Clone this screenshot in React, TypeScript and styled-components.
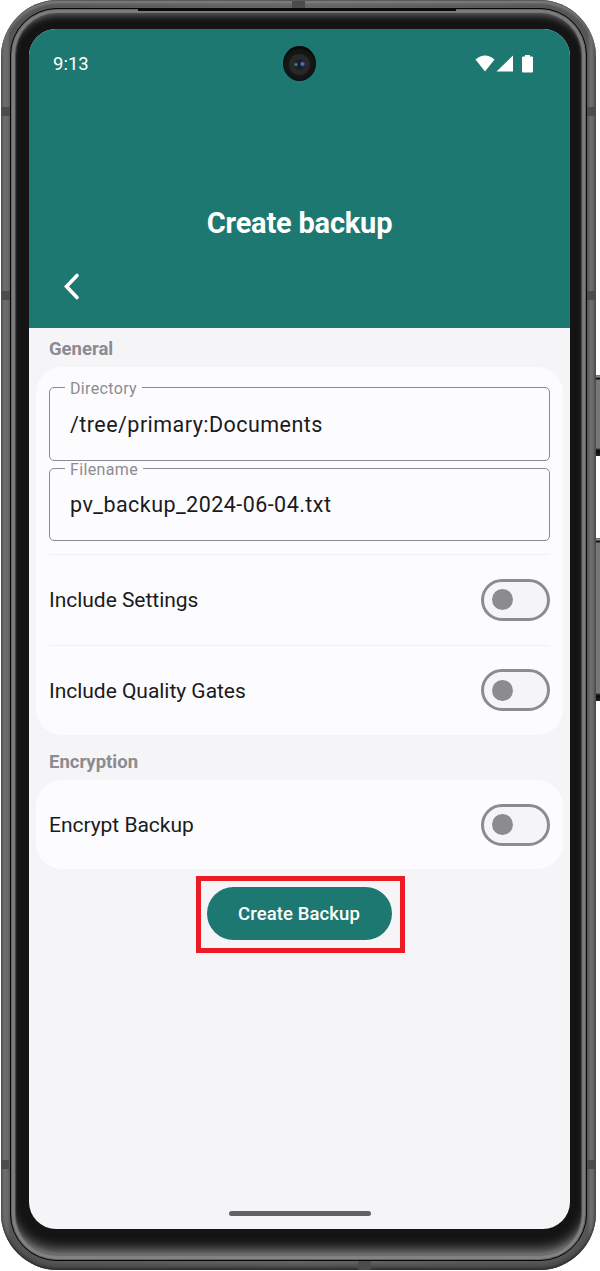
import React from 'react';
import styled, { createGlobalStyle } from 'styled-components';

const teal = '#1e7872';
const grey = '#8c8b90';

const GlobalStyle = createGlobalStyle`
  * { box-sizing: border-box; }
  body { margin: 0; background: #fff; font-family: Roboto, sans-serif; overflow: hidden; }
`;

const Stage = styled.div`
  position: relative;
  width: 600px;
  height: 1271px;
  padding: 0 4px 1px 1px;
`;

const Frame = styled.div`
  position: relative;
  height: 1270px;
  padding: 8px 9px 9px;
  border-radius: 57px;
  background: linear-gradient(90deg, #555 0, #6d6d6d 3px, #686868 7px, #555 9px, #666 50%, #555 586px, #707070 590px, #626262 593px, #444 595px);
  box-shadow: inset 0 1px 1px #555, inset 0 4px 3px -1px #858585, inset 0 -2px 2px #333, inset 0 -7px 4px -2px #484848;
`;

const Bezel = styled.div`
  height: 1253px;
  padding: 20px 16px 31px 18px;
  border: 1px solid #080808;
  border-radius: 47px;
  background: #141414;
  box-shadow:
    inset 0 0 0 1px #626262,
    inset 0 -5px 5px 0 #858585,
    inset 0 0 1px 4px #7c7c7c,
    inset 0 0 1px 5px #454545,
    inset 0 7px 6px 0 #5a5a5a,
    inset 0 -14px 12px -3px #747474;
`;

const Screen = styled.main`
  position: relative;
  display: flex;
  flex-direction: column;
  width: 541px;
  height: 1200px;
  border-radius: 27px;
  overflow: hidden;
  background: #f5f5f8;
`;

const SideButton = styled.div<{ $top: number; $height: number }>`
  position: absolute;
  left: 596px;
  top: ${(p) => p.$top}px;
  width: 4px;
  height: ${(p) => p.$height}px;
  background: linear-gradient(#666 0, #999 2px, #111 3px, #111 4px, #777 5px, #777 calc(100% - 8px), #333 calc(100% - 7px), #080808 calc(100% - 5px), #222 100%);
`;

const Band = styled.div<{ $x: number; $y: number; $w: number; $h: number }>`
  position: absolute;
  left: ${(p) => p.$x}px;
  top: ${(p) => p.$y}px;
  width: ${(p) => p.$w}px;
  height: ${(p) => p.$h}px;
  background: #4c4c4c;
`;

const Earpiece = styled.div`
  position: absolute;
  left: 138px;
  top: 9px;
  width: 318px;
  height: 2px;
  background: #080808;
`;

const Camera = styled.div`
  position: absolute;
  left: 254px;
  top: 17px;
  width: 33px;
  height: 35px;
  border-radius: 50%;
  background:
    radial-gradient(circle at 13px 18.5px, #5ba39d 0, #24504f 1.5px, transparent 2.5px),
    radial-gradient(circle at 19.5px 18px, #7492d6 0, #2e4586 2px, transparent 3px),
    radial-gradient(circle at 16.5px 18.5px, #161b24 0, #1c1f24 5px, #292929 6px, #272727 10px, #161616 11px, #141414 15px, #060606 17px);
`;

const Header = styled.header`
  height: 299px;
  background: ${teal};
  color: #fff;
  display: flex;
  flex-direction: column;
`;

const StatusBar = styled.div`
  display: flex;
  justify-content: space-between;
  align-items: center;
  height: 70px;
  padding: 0 36px 0 24px;
  font-size: 18.5px;
`;

const Title = styled.h1`
  margin: 105px 0 0;
  height: 38px;
  line-height: 38px;
  text-align: center;
  font-size: 29px;
  font-weight: 700;
  letter-spacing: -0.2px;
`;

const BackButton = styled.button`
  display: flex;
  width: 24px;
  height: 32px;
  margin: 27px 0 0 31px;
  padding: 0;
  border: 0;
  background: none;
`;

const SectionTitle = styled.h2<{ $height: number }>`
  margin: 0;
  height: ${(p) => p.$height}px;
  padding: 0 20px 6px;
  display: flex;
  align-items: flex-end;
  line-height: 24px;
  font-size: 18.5px;
  font-weight: 700;
  color: ${grey};
`;

const Card = styled.section`
  margin: 0 7px;
  padding: 0 13px;
  border-radius: 26px;
  background: #fcfcfe;
`;

const Fields = styled.div`
  display: flex;
  flex-direction: column;
  padding: 13px 0;
`;

const Field = styled.fieldset`
  margin: 0;
  height: 80.5px;
  min-width: 0;
  padding: 0 0 0 20px;
  border: 1.5px solid ${grey};
  border-radius: 5px;
`;

const Legend = styled.legend`
  margin-left: -5px;
  padding: 0 5px;
  height: 15px;
  line-height: 18px;
  font-size: 16px;
  letter-spacing: 0.35px;
  color: ${grey};
`;

const Value = styled.div`
  margin-top: 10.5px;
  line-height: 38px;
  font-size: 21.5px;
  letter-spacing: 0.45px;
  color: #1a1a1c;
`;

const Row = styled.div<{ $divided?: boolean }>`
  display: flex;
  align-items: center;
  justify-content: space-between;
  height: ${(p) => (p.$divided ? 90.5 : 89)}px;
  border-top: ${(p) => (p.$divided ? '1.5px solid #f0f0f3' : '0')};
  font-size: 21px;
  letter-spacing: -0.03px;
  color: #1a1a1c;
`;

const RowLabel = styled.span`
  padding-top: 1px;
`;

const Toggle = styled.div`
  display: flex;
  align-items: center;
  width: 69px;
  height: 42px;
  padding-left: 8px;
  border: 3px solid ${grey};
  border-radius: 21px;
  background: #f5f5f8;
`;

const Thumb = styled.span`
  width: 21px;
  height: 21px;
  border-radius: 50%;
  background: ${grey};
`;

const Highlight = styled.div`
  align-self: flex-start;
  margin: 7px 0 0 167px;
  width: 209px;
  height: 77px;
  padding: 6px 0 0 6px;
  border: 5px solid #ed1c24;
`;

const PrimaryButton = styled.button`
  display: block;
  width: 185px;
  height: 53px;
  padding: 0 1px 0 0;
  border: 0;
  border-radius: 27px;
  background: ${teal};
  color: #fff;
  font: 500 18.5px Roboto, sans-serif;
  letter-spacing: 0.1px;
`;

const HomeBar = styled.div`
  margin: auto auto 13px 199.5px;
  width: 142px;
  height: 5px;
  border-radius: 3px;
  background: #626262;
`;

const StatusIcons = () => (
  <svg width="59" height="18" viewBox="0 0 59 18" fill="#fff">
    <path d="M0.5 4.5 Q10 -3.5 19.500 4.500 L10 16.500 Z" />
    <path d="M21.500 16.500 L38 0.500 V16.500 Z" />
    <path d="M50 0 h5 v1.500 h2 q1 0 1 1 v14 q0 1-1 1 h-9 q-1 0-1-1 v-14 q0-1 1-1 h2 Z" />
  </svg>
);

const ToggleRow = ({ label, divided }: { label: string; divided?: boolean }) => (
  <Row $divided={divided}>
    <RowLabel>{label}</RowLabel>
    <Toggle role="switch" aria-checked={false} aria-label={label}>
      <Thumb />
    </Toggle>
  </Row>
);

const TextField = ({ label, value }: { label: string; value: string }) => (
  <Field>
    <Legend>{label}</Legend>
    <Value>{value}</Value>
  </Field>
);

export default function App() {
  return (
    <>
      <GlobalStyle />
      <Stage>
        <Frame>
          <Bezel>
            <Screen>
              <Header>
                <StatusBar>
                  <span>9:13</span>
                  <StatusIcons />
                </StatusBar>
                <Camera />
                <Title>Create backup</Title>
                <BackButton aria-label="Back">
                  <svg width="24" height="32" fill="none" stroke="#fff" strokeWidth="3.6" strokeLinecap="round" strokeLinejoin="miter">
                    <path d="M17 6.500 L6.500 17.500 L17 28.500" />
                  </svg>
                </BackButton>
              </Header>
              <SectionTitle $height={39}>General</SectionTitle>
              <Card>
                <Fields>
                  <TextField label="Directory" value="/tree/primary:Documents" />
                  <TextField label="Filename" value="pv_backup_2024-06-04.txt" />
                </Fields>
                <ToggleRow label="Include Settings" divided />
                <ToggleRow label="Include Quality Gates" divided />
              </Card>
              <SectionTitle $height={45}>Encryption</SectionTitle>
              <Card>
                <ToggleRow label="Encrypt Backup" />
              </Card>
              <Highlight>
                <PrimaryButton>Create Backup</PrimaryButton>
              </Highlight>
              <HomeBar />
            </Screen>
          </Bezel>
        </Frame>
        <Earpiece />
        <Band $x={292} $y={1} $w={13} $h={7} />
        <Band $x={358} $y={1261} $w={13} $h={9} />
        <Band $x={1} $y={107} $w={9} $h={9} />
        <Band $x={1} $y={291} $w={9} $h={9} />
        <Band $x={1} $y={1160} $w={8} $h={9} />
        <Band $x={587} $y={107} $w={9} $h={9} />
        <Band $x={587} $y={291} $w={9} $h={9} />
        <Band $x={587} $y={1160} $w={9} $h={9} />
        <SideButton $top={375} $height={81} />
        <SideButton $top={538} $height={163} />
      </Stage>
    </>
  );
}
